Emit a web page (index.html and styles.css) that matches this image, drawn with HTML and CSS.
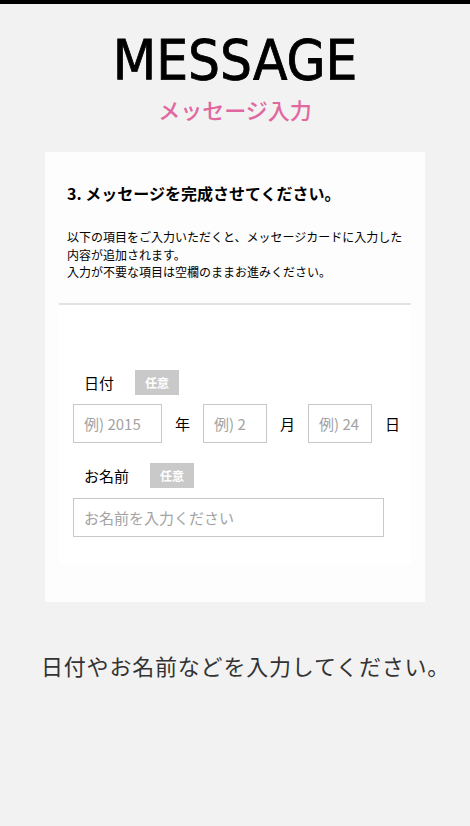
FILE: index.html
```html
<!DOCTYPE html>
<html lang="ja">
<head>
    <meta charset="UTF-8">
    <title>MESSAGE</title>
    <link rel="stylesheet" href="styles.css">
</head>
<body>
    <div class="topbar"></div>
    <header class="page-head">
        <h1>MESSAGE</h1>
        <p class="sub">メッセージ入力</p>
    </header>

    <div class="card">
        <h2>3. メッセージを完成させてください。</h2>
        <p class="lead">
            以下の項目をご入力いただくと、メッセージカードに入力した<br>
            内容が追加されます。<br>
            入力が不要な項目は空欄のままお進みください。
        </p>
        <div class="divider"></div>

        <form class="form-area" autocomplete="off">
            <div class="field-label">
                <span>日付</span>
                <span class="badge">任意</span>
            </div>
            <div class="date-row">
                <input type="text" class="in-year" placeholder="例) 2015">
                <span class="unit">年</span>
                <input type="text" class="in-short" placeholder="例) 2">
                <span class="unit">月</span>
                <input type="text" class="in-short" placeholder="例) 24">
                <span class="unit">日</span>
            </div>

            <div class="field-label second">
                <span>お名前</span>
                <span class="badge">任意</span>
            </div>
            <input type="text" class="in-name" placeholder="お名前を入力ください">
        </form>
    </div>

    <p class="note">日付やお名前などを入力してください。</p>
</body>
</html>
```

FILE: styles.css
```css
body {
    font-family: "Noto Sans CJK JP", "Liberation Sans", sans-serif;
    background: #f2f2f2;
    color: #000;
    margin: 0;
    padding: 0;
}

.topbar {
    height: 4px;
    background: #000;
}

.page-head {
    text-align: center;
}

    .page-head h1 {
        font-family: "DejaVu Sans Condensed", "DejaVu Sans", sans-serif;
        font-stretch: condensed;
        font-weight: normal;
        font-size: 56px;
        line-height: 56px;
        margin: 28px 0 0;
        -webkit-text-stroke: 0.8px #000;
    }

    .page-head .sub {
        color: #e0679f;
        font-size: 22px;
        font-weight: 500;
        line-height: 22px;
        margin: 10px 0 0;
    }

.card {
    background: #fdfdfd;
    margin: 32px 45px 0;
    padding: 31px 14px 39px;
}

    .card h2 {
        font-size: 16px;
        line-height: 21px;
        margin: 0;
        padding-left: 8px;
    }

.lead {
    font-size: 12px;
    line-height: 17.5px;
    margin: 24px 0 0;
    padding-left: 8px;
}

.divider {
    height: 2px;
    background: #e2e2e2;
    margin-top: 22px;
}

.form-area {
    background: #fff;
    padding: 65px 14px 26px;
}

.field-label {
    display: flex;
    align-items: center;
    gap: 21px;
    height: 25px;
    margin-left: 11px;
    font-size: 15px;
}

    .field-label.second {
        margin-top: 20px;
    }

.badge {
    background: #c9c9c9;
    color: #fff;
    font-size: 12px;
    font-weight: bold;
    width: 44px;
    height: 25px;
    line-height: 25px;
    text-align: center;
}

.date-row {
    display: flex;
    align-items: center;
    gap: 13px;
    margin-top: 9px;
}

input[type="text"] {
    font-family: "Noto Sans CJK JP", "Liberation Sans", sans-serif;
    font-size: 15px;
    height: 39px;
    box-sizing: border-box;
    border: 1px solid #c8c8c8;
    border-radius: 0;
    padding: 0 10px;
    margin: 0;
    background: #fff;
}

    input[type="text"]::placeholder {
        color: #a3a3a3;
    }

.in-year {
    width: 89px;
}

.in-short {
    width: 64px;
}

.in-name {
    display: block;
    width: 311px;
    margin-top: 10px !important;
}

.unit {
    font-size: 15px;
}

.note {
    color: #333;
    font-size: 22px;
    letter-spacing: 0.8px;
    line-height: 31px;
    margin: 48px 0 0;
    padding-left: 41px;
}
```
